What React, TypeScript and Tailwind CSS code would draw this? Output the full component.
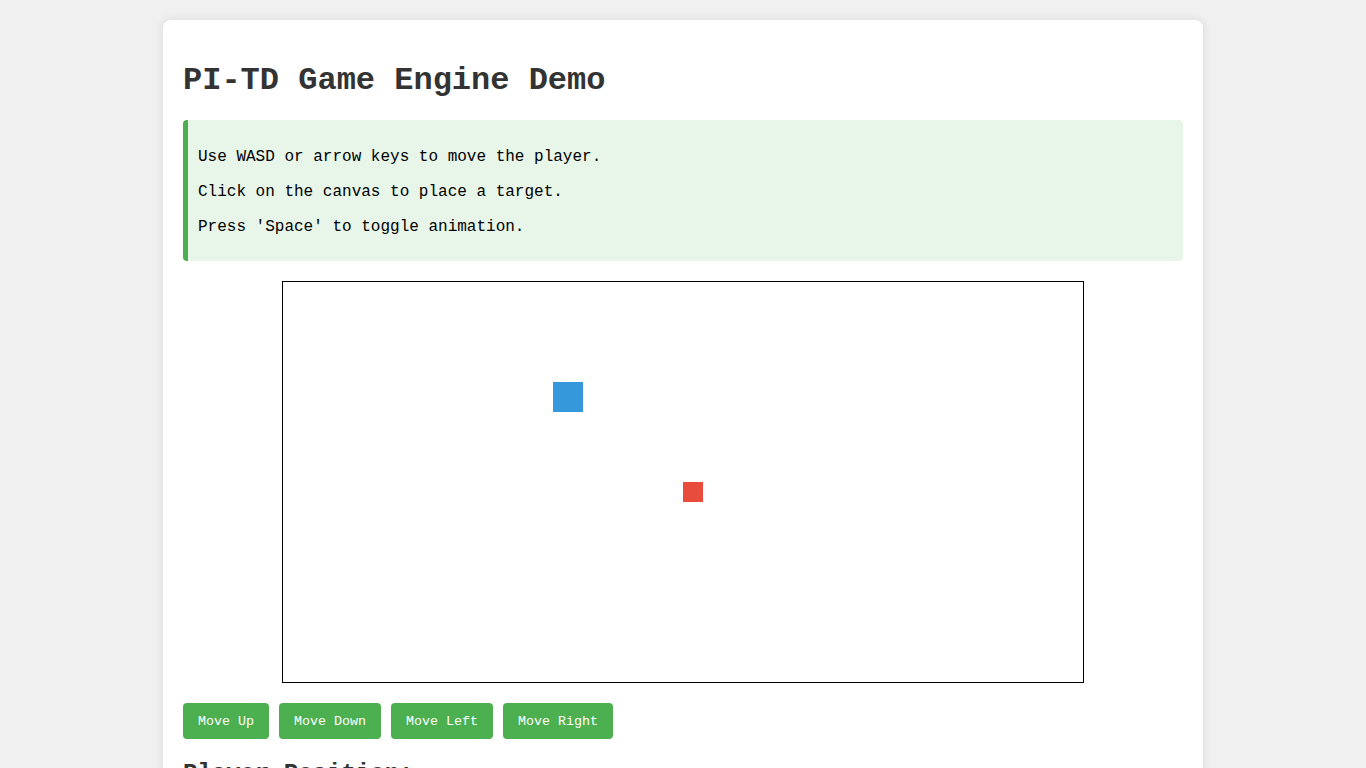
import React from 'react'

const player = { x: 270, y: 100, size: 30 }
const target = { x: 400, y: 200, size: 20 }

export default function App() {
  return (
    <div
      className="min-h-screen bg-[#f0f0f0] pt-5 pb-5"
      style={{ fontFamily: '"Liberation Mono", "Courier New", monospace' }}
    >
      <div className="mx-auto w-[1040px] rounded-lg bg-white px-5 pt-5 pb-5 shadow-[0_0_10px_rgba(0,0,0,0.1)]">
        <h1 className="mt-[23px] mb-[21px] text-[32px] leading-[36px] font-bold text-[#333]">
          PI-TD Game Engine Demo
        </h1>

        {/* Instructions */}
        <div className="rounded border-l-[5px] border-[#4CAF50] bg-[#e8f5e9] pt-[12px] pb-[8px] pl-[10px] pr-[15px] text-[16px] text-black">
          <p className="my-4 leading-[19px]">Use WASD or arrow keys to move the player.</p>
          <p className="my-4 leading-[19px]">Click on the canvas to place a target.</p>
          <p className="my-4 leading-[19px]">Press 'Space' to toggle animation.</p>
        </div>

        {/* Canvas */}
        <div className="mt-5 flex justify-center">
          <div className="relative h-[402px] w-[802px] border border-black bg-white">
            <div
              className="absolute bg-[#3498db]"
              style={{ left: player.x, top: player.y, width: player.size, height: player.size }}
            />
            <div
              className="absolute bg-[#e74c3c]"
              style={{ left: target.x, top: target.y, width: target.size, height: target.size }}
            />
          </div>
        </div>

        {/* Controls */}
        <div className="mt-5 flex gap-[10px]">
          {['Move Up', 'Move Down', 'Move Left', 'Move Right'].map((label) => (
            <button
              key={label}
              className="h-9 rounded bg-[#4CAF50] px-[15px] text-[13.333px] leading-[15px] text-white"
            >
              {label}
            </button>
          ))}
        </div>

        <h2 className="mt-[21px] mb-5 text-[24px] leading-[27px] font-bold text-[#333]">
          Player Position:
        </h2>
        <p className="text-[16px] text-black">x: 270, y: 100</p>
      </div>
    </div>
  )
}
